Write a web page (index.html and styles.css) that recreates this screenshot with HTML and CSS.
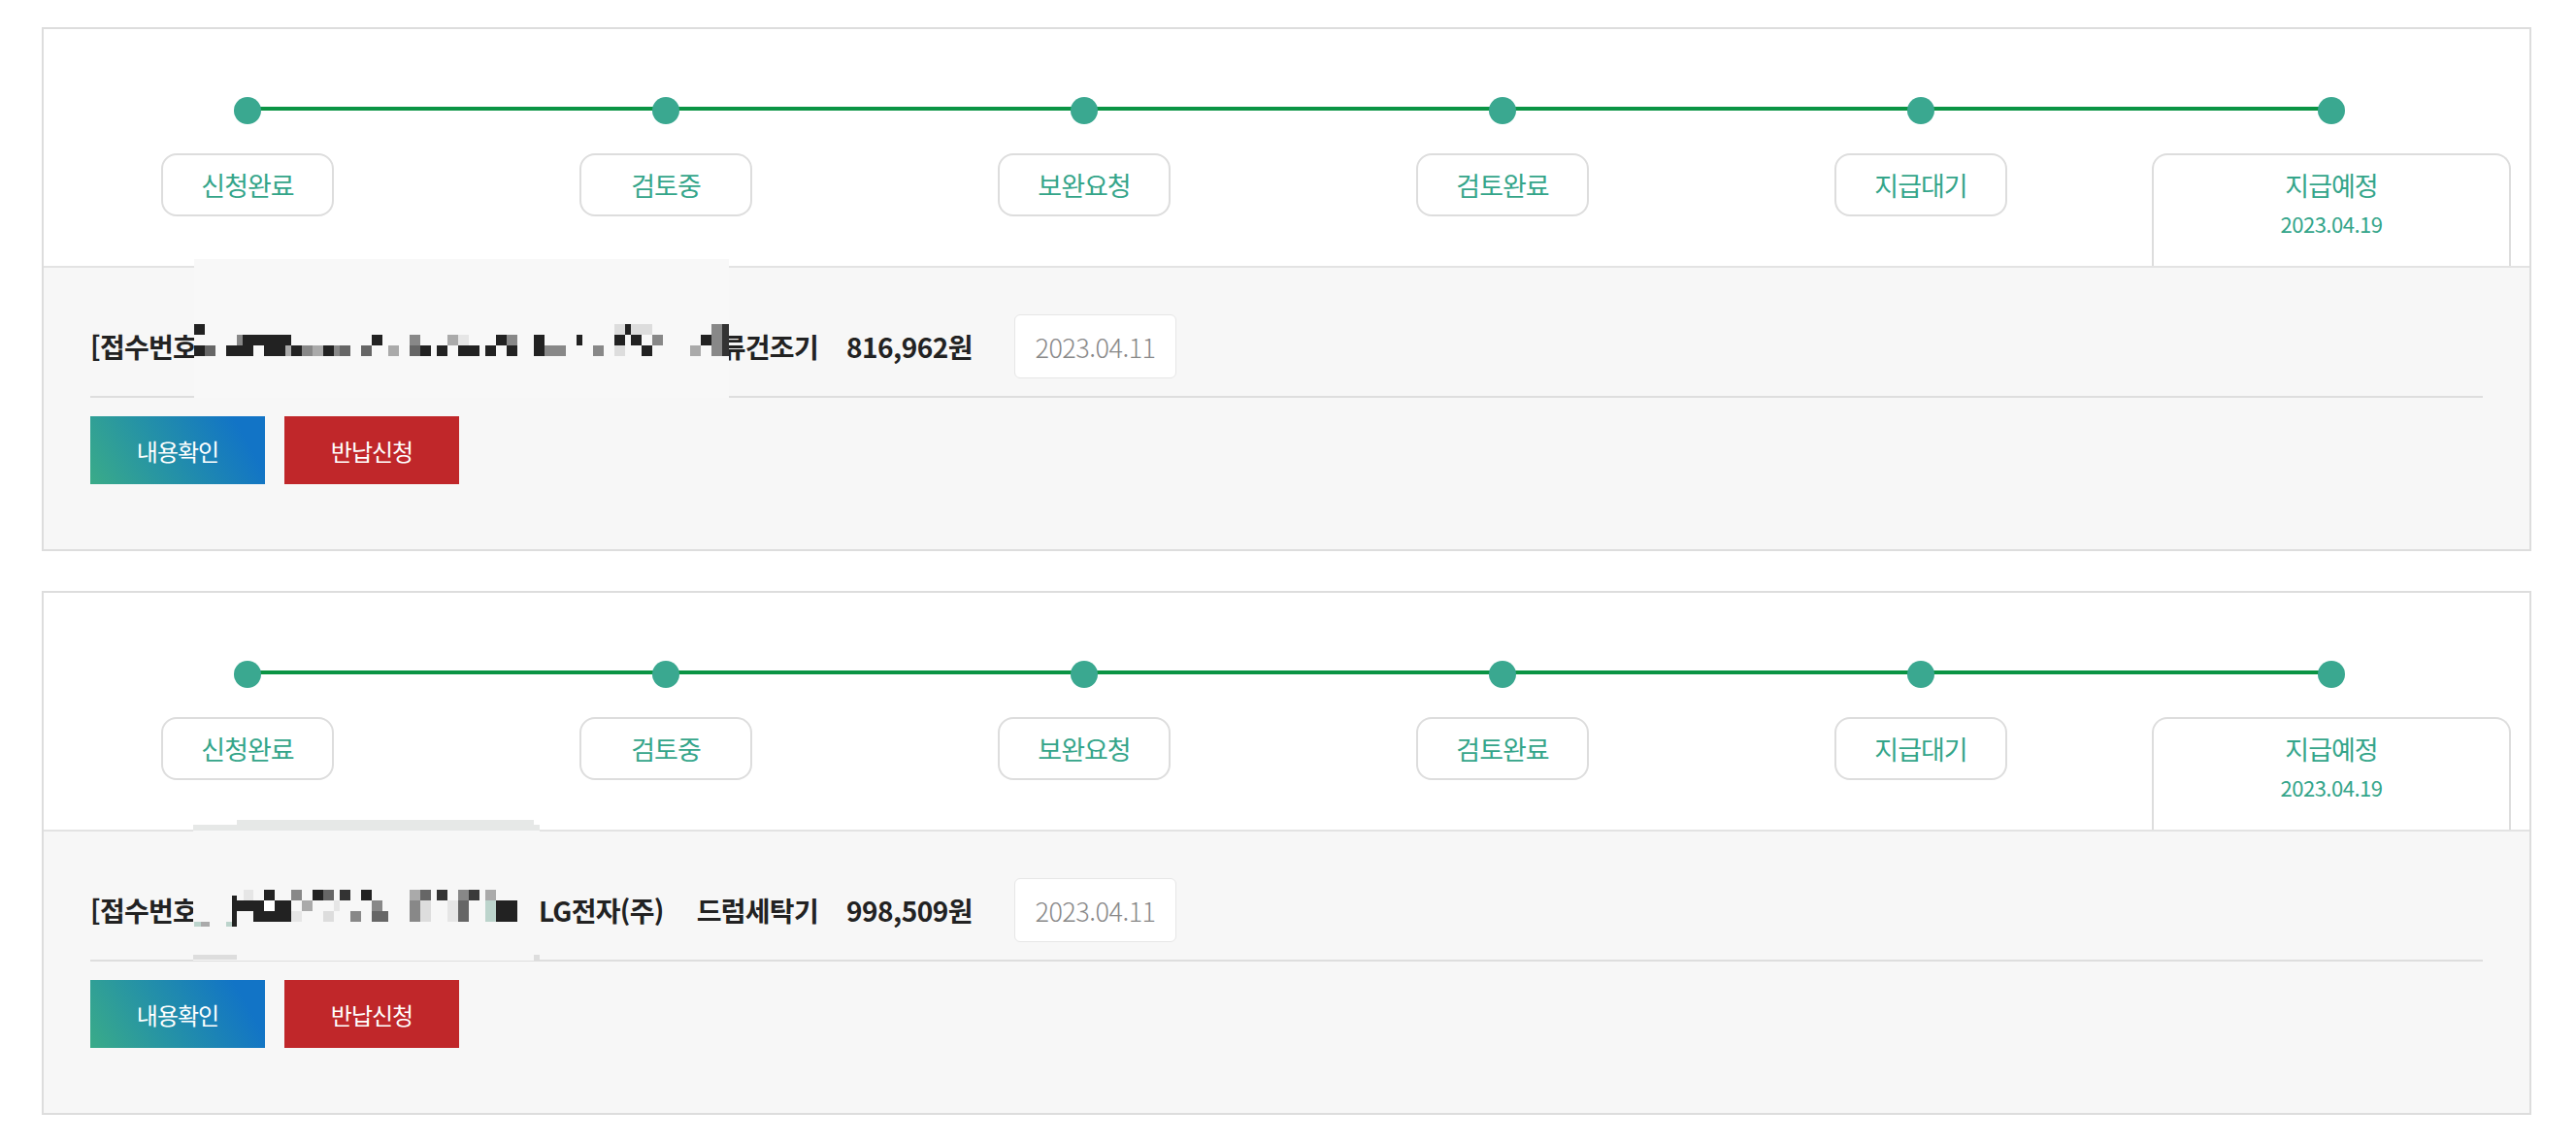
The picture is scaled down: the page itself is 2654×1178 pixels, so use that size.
FILE: index.html
```html
<!DOCTYPE html>
<html lang="ko">

<head>
    <meta charset="utf-8">
    <meta name="viewport" content="width=device-width, initial-scale=1.0">
    <title>지급현황</title>

    <link rel="stylesheet" href="styles.css">
</head>

<body>
    <main class="list">

        <article class="card">
            <div class="track">
                <ol class="steps">
                    <li class="step"><span class="dot"></span><span class="pill">신청완료</span></li>
                    <li class="step"><span class="dot"></span><span class="pill">검토중</span></li>
                    <li class="step"><span class="dot"></span><span class="pill">보완요청</span></li>
                    <li class="step"><span class="dot"></span><span class="pill">검토완료</span></li>
                    <li class="step"><span class="dot"></span><span class="pill">지급대기</span></li>
                    <li class="step last"><span class="dot"></span>
                        <span class="pill big">지급예정<small>2023.04.19</small></span>
                    </li>
                </ol>
            </div>
            <div class="info">
                <div class="row">
                    <p class="title"><span>[접수번호</span><span>류건조기</span></p>
                    <p class="amount">816,962원</p>
                    <p class="date">2023.04.11</p>
                </div>
                <div class="btns">
                    <button class="btn check">내용확인</button>
                    <button class="btn refund">반납신청</button>
                </div>
            </div>

            <!-- 가림 처리 -->
            <div class="mask mask1">
                <svg width="551" height="143" viewBox="0 0 551 143">
                    <rect x="0" y="0" width="551" height="143" fill="#f8f8f8"/>
                    <g>
                        <rect x="0" y="67" width="11" height="11" fill="#222"/>
                        <rect x="433" y="67" width="11" height="11" fill="#ddd"/>
                        <rect x="444" y="67" width="6" height="11" fill="#222"/>
                        <rect x="450" y="67" width="22" height="11" fill="#ddd"/>
                        <rect x="533" y="67" width="11" height="33" fill="#888"/>
                        <rect x="544" y="67" width="7" height="33" fill="#333"/>

                        <rect x="44" y="78" width="6" height="11" fill="#888"/>
                        <rect x="50" y="78" width="50" height="11" fill="#222"/>
                        <rect x="183" y="78" width="11" height="11" fill="#222"/>
                        <rect x="222" y="78" width="11" height="11" fill="#888"/>
                        <rect x="261" y="78" width="11" height="11" fill="#aaa"/>
                        <rect x="272" y="78" width="11" height="11" fill="#e6e6e6"/>
                        <rect x="311" y="78" width="11" height="11" fill="#222"/>
                        <rect x="322" y="78" width="11" height="11" fill="#888"/>
                        <rect x="350" y="78" width="11" height="22" fill="#222"/>
                        <rect x="394" y="78" width="6" height="11" fill="#222"/>
                        <rect x="433" y="78" width="11" height="11" fill="#222"/>
                        <rect x="450" y="78" width="11" height="11" fill="#222"/>
                        <rect x="472" y="78" width="11" height="11" fill="#888"/>
                        <rect x="522" y="78" width="11" height="11" fill="#222"/>

                        <rect x="0" y="89" width="11" height="11" fill="#222"/>
                        <rect x="11" y="89" width="11" height="11" fill="#666"/>
                        <rect x="33" y="89" width="28" height="11" fill="#222"/>
                        <rect x="72" y="89" width="22" height="11" fill="#222"/>
                        <rect x="94" y="89" width="6" height="11" fill="#aaa"/>
                        <rect x="100" y="89" width="11" height="11" fill="#222"/>
                        <rect x="111" y="89" width="11" height="11" fill="#888"/>
                        <rect x="122" y="89" width="11" height="11" fill="#aaa"/>
                        <rect x="133" y="89" width="11" height="11" fill="#222"/>
                        <rect x="144" y="89" width="6" height="11" fill="#888"/>
                        <rect x="150" y="89" width="11" height="11" fill="#666"/>
                        <rect x="172" y="89" width="11" height="11" fill="#666"/>
                        <rect x="200" y="89" width="11" height="11" fill="#aaa"/>
                        <rect x="222" y="89" width="11" height="11" fill="#666"/>
                        <rect x="233" y="89" width="11" height="11" fill="#222"/>
                        <rect x="250" y="89" width="11" height="11" fill="#222"/>
                        <rect x="272" y="89" width="22" height="11" fill="#222"/>
                        <rect x="300" y="89" width="11" height="11" fill="#222"/>
                        <rect x="322" y="89" width="11" height="11" fill="#222"/>
                        <rect x="361" y="89" width="22" height="11" fill="#888"/>
                        <rect x="411" y="89" width="11" height="11" fill="#888"/>
                        <rect x="433" y="89" width="11" height="11" fill="#ddd"/>
                        <rect x="461" y="89" width="11" height="11" fill="#222"/>
                        <rect x="511" y="89" width="11" height="11" fill="#aaa"/>
                    </g>
                </svg>
            </div>
        </article>

        <article class="card">
            <div class="track">
                <ol class="steps">
                    <li class="step"><span class="dot"></span><span class="pill">신청완료</span></li>
                    <li class="step"><span class="dot"></span><span class="pill">검토중</span></li>
                    <li class="step"><span class="dot"></span><span class="pill">보완요청</span></li>
                    <li class="step"><span class="dot"></span><span class="pill">검토완료</span></li>
                    <li class="step"><span class="dot"></span><span class="pill">지급대기</span></li>
                    <li class="step last"><span class="dot"></span>
                        <span class="pill big">지급예정<small>2023.04.19</small></span>
                    </li>
                </ol>
            </div>
            <div class="info">
                <div class="row">
                    <p class="title"><span>[접수번호</span><span>LG전자(주)<b class="sp"></b>드럼세탁기</span></p>
                    <p class="amount">998,509원</p>
                    <p class="date">2023.04.11</p>
                </div>
                <div class="btns">
                    <button class="btn check">내용확인</button>
                    <button class="btn refund">반납신청</button>
                </div>
            </div>

            <div class="mask mask2">
                <svg width="357" height="145" viewBox="0 0 357 145">
                    <rect x="45" y="0" width="306" height="11" fill="#e6e8e7"/>
                    <rect x="0" y="5" width="357" height="6" fill="#e6e8e7"/>
                    <rect x="0" y="11" width="357" height="134" fill="#f7f7f7"/>
                    <rect x="0" y="139" width="45" height="5" fill="#ddd"/>
                    <rect x="351" y="139" width="6" height="6" fill="#ddd"/>
                    <g>
                        <rect x="52" y="72" width="10" height="11" fill="#e6e6e6"/>
                        <rect x="73" y="72" width="11" height="11" fill="#222"/>
                        <rect x="101" y="72" width="11" height="11" fill="#888"/>
                        <rect x="123" y="72" width="11" height="11" fill="#222"/>
                        <rect x="134" y="72" width="11" height="11" fill="#666"/>
                        <rect x="151" y="72" width="11" height="11" fill="#333"/>
                        <rect x="173" y="72" width="11" height="11" fill="#222"/>
                        <rect x="223" y="72" width="11" height="11" fill="#aaa"/>
                        <rect x="234" y="72" width="11" height="11" fill="#666"/>
                        <rect x="251" y="72" width="11" height="11" fill="#333"/>
                        <rect x="273" y="72" width="11" height="11" fill="#888"/>
                        <rect x="284" y="72" width="11" height="11" fill="#3a3a3a"/>
                        <rect x="301" y="72" width="11" height="11" fill="#aaa"/>

                        <rect x="40" y="78" width="5" height="32" fill="#222"/>
                        <rect x="45" y="83" width="28" height="11" fill="#222"/>
                        <rect x="73" y="83" width="11" height="11" fill="#fff"/>
                        <rect x="84" y="83" width="17" height="11" fill="#222"/>
                        <rect x="112" y="83" width="11" height="11" fill="#aaa"/>
                        <rect x="145" y="83" width="6" height="11" fill="#e6e6e6"/>
                        <rect x="184" y="83" width="11" height="11" fill="#888"/>
                        <rect x="223" y="83" width="11" height="22" fill="#888"/>
                        <rect x="234" y="83" width="11" height="22" fill="#ddd"/>
                        <rect x="262" y="83" width="11" height="22" fill="#e6e6e6"/>
                        <rect x="273" y="83" width="11" height="22" fill="#666"/>
                        <rect x="301" y="83" width="11" height="22" fill="#bcd4cc"/>
                        <rect x="312" y="83" width="22" height="22" fill="#222"/>

                        <rect x="62" y="94" width="39" height="11" fill="#222"/>
                        <rect x="101" y="94" width="11" height="11" fill="#e6e6e6"/>
                        <rect x="134" y="94" width="11" height="11" fill="#ddd"/>
                        <rect x="162" y="94" width="11" height="11" fill="#888"/>
                        <rect x="184" y="94" width="17" height="11" fill="#666"/>

                        <rect x="1" y="105" width="7" height="5" fill="#bcd4cc"/>
                        <rect x="8" y="105" width="9" height="5" fill="#aaa"/>
                        <rect x="34" y="105" width="6" height="5" fill="#bcd4cc"/>
                    </g>
                </svg>
            </div>
        </article>

    </main>
</body>

</html>
```

FILE: styles.css
```css
* {
    box-sizing: border-box;
}

body {
    margin: 0;
    background: #fff;
    font-family: "Noto Sans CJK KR", "Noto Sans", sans-serif;
    color: #222;
}

p {
    margin: 0;
}

.list {
    padding: 28px 46px 30px 43px;
    display: flex;
    flex-direction: column;
    gap: 41px;
}

.card {
    position: relative;
    border: 2px solid #dddddd;
    background: #fff;
}

/* 진행 단계 */
.track {
    padding-top: 70px;
    border-bottom: 2px solid #e3e3e3;
}

.steps {
    list-style: none;
    margin: 0 0 0 121px;
    padding: 0;
    position: relative;
    display: grid;
    grid-template-columns: repeat(5, 178px) 266px;
    column-gap: 253px;
    align-items: start;
}

.steps::before {
    content: "";
    position: absolute;
    left: 89px;
    top: 10px;
    width: 2147px;
    height: 4px;
    background: #0a9444;
}

.step {
    display: flex;
    flex-direction: column;
    align-items: center;
}

.step.last {
    width: 370px;
    margin-left: -104px;
}

.dot {
    position: relative;
    z-index: 1;
    width: 28px;
    height: 28px;
    border-radius: 50%;
    background: #3aa890;
    margin-bottom: 30px;
}

.pill {
    width: 178px;
    height: 65px;
    border: 2px solid #dddddd;
    border-radius: 16px;
    display: flex;
    align-items: center;
    justify-content: center;
    color: #34a58a;
    font-size: 27px;
    letter-spacing: -1px;
    line-height: 30px;
}

.pill.big {
    width: 370px;
    height: 116px;
    border-bottom: 0;
    border-radius: 16px 16px 0 0;
    flex-direction: column;
    justify-content: flex-start;
    padding-top: 16px;
}

.pill small {
    display: block;
    margin-top: 11px;
    font-size: 22px;
    line-height: 26px;
    letter-spacing: -0.5px;
}

/* 접수 정보 */
.info {
    background: #f7f7f7;
    padding: 48px 48px 67px;
}

.row {
    display: flex;
    align-items: center;
    padding-bottom: 18px;
    border-bottom: 2px solid #dedede;
}

.title {
    width: 750px;
    display: flex;
    justify-content: space-between;
    font-size: 28px;
    font-weight: 700;
    letter-spacing: -0.7px;
    line-height: 40px;
}

.sp {
    display: inline-block;
    width: 34px;
}

.amount {
    margin-left: 29px;
    font-size: 28px;
    font-weight: 700;
    letter-spacing: -0.5px;
    line-height: 40px;
}

.date {
    margin-left: 43px;
    width: 167px;
    height: 66px;
    border: 1px solid #e6e6e6;
    border-radius: 6px;
    background: #fff;
    display: flex;
    align-items: center;
    justify-content: center;
    color: #888;
    font-size: 27px;
    font-weight: 300;
    letter-spacing: -0.5px;
}

.btns {
    display: flex;
    gap: 20px;
    margin-top: 19px;
}

.btn {
    width: 180px;
    height: 70px;
    border: 0;
    padding: 0;
    color: #fff;
    font-family: inherit;
    font-size: 24px;
    letter-spacing: -1px;
}

.check {
    background: linear-gradient(60deg, #3aab88 0%, #2592a6 40%, #1274c6 85%);
}

.refund {
    background: #c0272a;
}

/* 가림 */
.mask {
    position: absolute;
    line-height: 0;
}

.mask1 {
    left: 155px;
    top: 237px;
}

.mask2 {
    left: 154px;
    top: 234px;
}
```
